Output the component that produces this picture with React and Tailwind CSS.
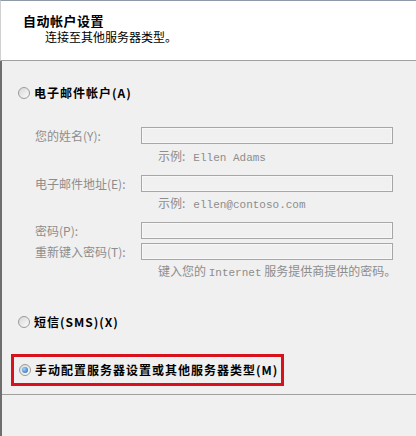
import React from "react";

const cjk = '"Noto Sans CJK SC", "Liberation Sans", sans-serif';
const mono = '"Liberation Mono", "Noto Sans CJK SC", monospace';

function Radio({ checked }) {
  return (
    <span className="w-[12px] h-[12px] rounded-full border border-[#9a9a9a] bg-gradient-to-br from-[#d8d8d8] to-[#fbfbfb] flex items-center justify-center shrink-0">
      {checked && (
        <span className="w-[6px] h-[6px] rounded-full bg-[radial-gradient(circle_at_35%_35%,#9fd4ff,#1d5fae)]" />
      )}
    </span>
  );
}

function Field({ label, top }) {
  return (
    <div className={`flex items-center h-[17px] ${top}`}>
      <div className="w-[139px] pl-[33px] text-[12px] text-[#8d8d8d] leading-[17px] whitespace-nowrap">{label}</div>
      <div className="w-[252px] h-[17px] border border-[#a7a7a7] bg-[#f0f0f0] shadow-[inset_0_0_0_1px_#f7f7f7]" />
    </div>
  );
}

function Hint({ children, top }) {
  return (
    <div className={`pl-[156px] h-[14px] text-[12px] leading-[14px] text-[#8d8d8d] whitespace-nowrap ${top}`}>
      {children}
    </div>
  );
}

export default function App() {
  return (
    <div className="w-[416px] h-[436px] bg-[#f0f0f0] overflow-hidden" style={{ fontFamily: cjk }}>
      <div className="h-[61px] bg-white border-t border-t-[#8e9aa9] border-l border-l-[#d0d0d0] border-b border-b-[#a0a0a0] pl-[22px] pt-[11px]">
        <div className="text-[13px] font-bold leading-[17px] text-black tracking-[0.5px]">自动帐户设置</div>
        <div className="pl-[22px] text-[12px] leading-[15px] text-black">连接至其他服务器类型。</div>
      </div>
      <div className="border-l-2 border-l-[#6e6e6e] h-[375px]">
        <div className="flex items-center gap-[4px] pl-[16px] pt-[25px] h-[39px]">
          <Radio />
          <span className="text-[12px] font-bold leading-[14px] text-black tracking-[1px]">电子邮件帐户(A)</span>
        </div>
        <Field label="您的姓名(Y):" top="mt-[27px]" />
        <Hint top="mt-[5px]">
          示例:<span style={{ fontFamily: mono }} className="text-[11px] ml-[8px]">Ellen Adams</span>
        </Hint>
        <Field label="电子邮件地址(E):" top="mt-[12px]" />
        <Hint top="mt-[4px]">
          示例:<span style={{ fontFamily: mono }} className="text-[11px] ml-[8px]">ellen@contoso.com</span>
        </Hint>
        <Field label="密码(P):" top="mt-[12px]" />
        <Field label="重新键入密码(T):" top="mt-[4px]" />
        <Hint top="mt-[4px]">
          键入您的 <span style={{ fontFamily: mono }} className="text-[11px]">Internet</span> 服务提供商提供的密码。
        </Hint>
        <div className="flex items-center gap-[4px] pl-[16px] mt-[37px] h-[14px]">
          <Radio />
          <span className="text-[12px] font-bold leading-[14px] text-black tracking-[1px]">短信(SMS)(X)</span>
        </div>
        <div className="ml-[9px] mt-[25px] w-[273px] h-[32px] border-[3px] border-[#d8121c] flex items-center gap-[4px] pl-[5px]">
          <Radio checked />
          <span className="text-[12px] font-bold leading-[14px] text-black whitespace-nowrap tracking-[1px]">手动配置服务器设置或其他服务器类型(M)</span>
        </div>
        <div className="mt-[8px] border-t border-[#a0a0a0]" />
      </div>
    </div>
  );
}
